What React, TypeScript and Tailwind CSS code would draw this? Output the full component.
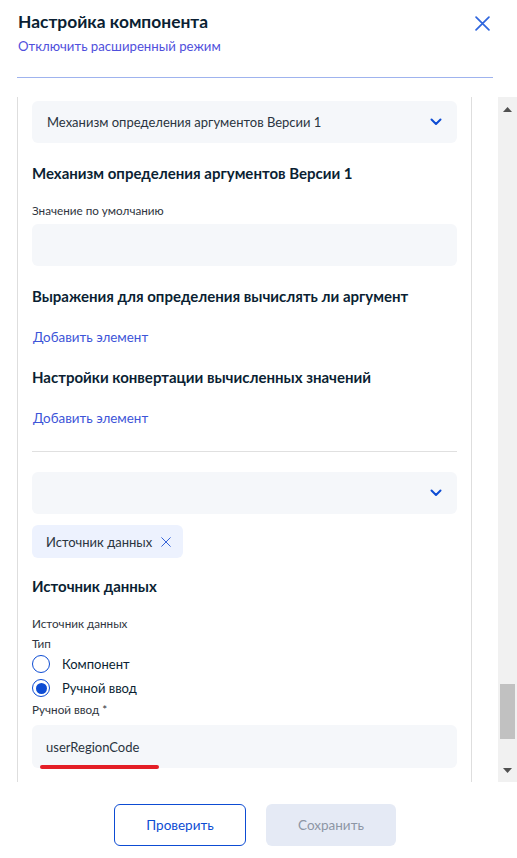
import React from 'react';

const FONT = { fontFamily: 'Lato, "Noto Sans", sans-serif' };

// Иконки
const Chevron = () => (
  <svg width="12" height="8" viewBox="0 0 12 8" fill="none">
    <path d="M1.5 1.5L6 6L10.5 1.5" stroke="#0d4cd3" strokeWidth="2" strokeLinecap="round" strokeLinejoin="round" />
  </svg>
);

const Cross = ({ size, color, width }: { size: number; color: string; width: number }) => (
  <svg width={size} height={size} viewBox="0 0 14 14" fill="none">
    <path d="M1 1L13 13M13 1L1 13" stroke={color} strokeWidth={width} strokeLinecap="round" />
  </svg>
);

const Select = ({ value, className }: { value?: string; className?: string }) => (
  <div className={`h-[42px] rounded-md bg-[#f5f7fa] flex items-center justify-between pl-[15px] pr-[15px] ${className ?? ''}`}>
    <span className="text-[13px] leading-4 text-[#2a3440]">{value}</span>
    <Chevron />
  </div>
);

const Heading = ({ children, className }: { children: React.ReactNode; className?: string }) => (
  <div className={`text-[15px] leading-5 font-bold text-[#0b1f33] ${className ?? ''}`}>{children}</div>
);

const Label = ({ children, className }: { children: React.ReactNode; className?: string }) => (
  <div className={`text-[11.7px] leading-4 text-[#2f3540] ${className ?? ''}`}>{children}</div>
);

const AddLink = ({ className }: { className?: string }) => (
  <div className={`pl-px text-[13.4px] leading-5 text-[#3d55d8] ${className ?? ''}`}>Добавить элемент</div>
);

const Radio = ({ label, checked }: { label: string; checked?: boolean }) => (
  <div className="flex items-center h-[18px] gap-3">
    <div className="w-[18px] h-[18px] rounded-full border-[1.5px] border-[#0d4cd3] flex items-center justify-center">
      {checked && <div className="w-[11px] h-[11px] rounded-full bg-[#0d4cd3]" />}
    </div>
    <span className="text-[13px] leading-4 text-[#0b1f33]">{label}</span>
  </div>
);

const Scrollbar = () => (
  <div className="w-[19px] h-full bg-[#f1f1f1] flex flex-col items-center">
    <div className="h-[17px] flex items-center justify-center pt-[7px]">
      <svg width="9" height="5" viewBox="0 0 9 5"><path d="M0 5L4.5 0L9 5Z" fill="#505050" /></svg>
    </div>
    <div className="flex-1 w-full flex flex-col justify-end px-[2px] pb-[26px]">
      <div className="h-[55px] w-full bg-[#c1c1c1]" />
    </div>
    <div className="h-[17px] flex items-center justify-center pb-[6px]">
      <svg width="9" height="5" viewBox="0 0 9 5"><path d="M0 0L9 0L4.5 5Z" fill="#505050" /></svg>
    </div>
  </div>
);

export default function App() {
  return (
    <div className="w-[517px] h-[858px] bg-white overflow-hidden" style={FONT}>
      {/* Шапка */}
      <div className="pl-[18px] pr-[24px] pt-[10px] flex justify-between">
        <div>
          <div className="text-[17.4px] leading-6 font-bold text-[#0b1f33]">Настройка компонента</div>
          <div className="mt-[4px] text-[13.2px] leading-4 text-[#5050dc]">Отключить расширенный режим</div>
        </div>
        <div className="pt-[6px] pr-[3px]">
          <Cross size={15} color="#2f66de" width={1.6} />
        </div>
      </div>
      <div className="ml-[17px] mr-[24px] mt-[23px] h-px bg-[#9fb3ee]" />

      {/* Прокручиваемая область */}
      <div className="mt-[19px] h-[685px] flex">
        <div className="ml-[17px] w-[455px] h-full border-x border-[#dedede] pl-[14px] pr-[14px] overflow-hidden">
          <Select value="Механизм определения аргументов Версии 1" className="mt-[4px]" />
          <Heading className="mt-[20px]">Механизм определения аргументов Версии 1</Heading>
          <Label className="mt-[19px]">Значение по умолчанию</Label>
          <div className="mt-[6px] h-[42px] rounded-md bg-[#f5f7fa]" />
          <Heading className="mt-[20px]">Выражения для определения вычислять ли аргумент</Heading>
          <AddLink className="mt-[21px]" />
          <Heading className="mt-[20px]">Настройки конвертации вычисленных значений</Heading>
          <AddLink className="mt-[21px]" />
          <div className="mt-[23px] h-px bg-[#e0e0e0]" />
          <Select className="mt-[20px]" />
          <div className="mt-[11px] inline-flex items-center h-[33px] rounded-md bg-[#edf2fe] pl-[14px] pr-[12px] gap-[9px]">
            <span className="text-[13px] leading-4 text-[#2a3440]">Источник данных</span>
            <Cross size={10} color="#3563d8" width={1.4} />
          </div>
          <Heading className="mt-[18px]">Источник данных</Heading>
          <Label className="mt-[19px]">Источник данных</Label>
          <Label className="mt-[4px]">Тип</Label>
          <div className="mt-[4px] flex flex-col gap-[6px]">
            <Radio label="Компонент" />
            <Radio label="Ручной ввод" checked />
          </div>
          <Label className="mt-[4px]">Ручной ввод *</Label>
          <div className="relative mt-[8px] h-[43px] rounded-md bg-[#f5f7fa] flex items-center pl-[14px]">
            <span className="text-[13px] leading-4 text-[#2a3440]">userRegionCode</span>
            <div className="absolute left-[8px] top-[40px] w-[119px] h-[4px] rounded-full bg-[#e41e26]" />
          </div>
        </div>
        <div className="flex-1" />
        <Scrollbar />
      </div>

      {/* Кнопки */}
      <div className="mt-[22px] flex gap-5 pl-[114px]">
        <button className="w-[132px] h-[42px] rounded-md border border-[#0d4cd3] text-[13.5px] text-[#0d4cd3] bg-white">
          Проверить
        </button>
        <button className="w-[130px] h-[42px] rounded-md bg-[#e5eaf5] text-[13.5px] text-[#8d96a5]">
          Сохранить
        </button>
      </div>
    </div>
  );
}
